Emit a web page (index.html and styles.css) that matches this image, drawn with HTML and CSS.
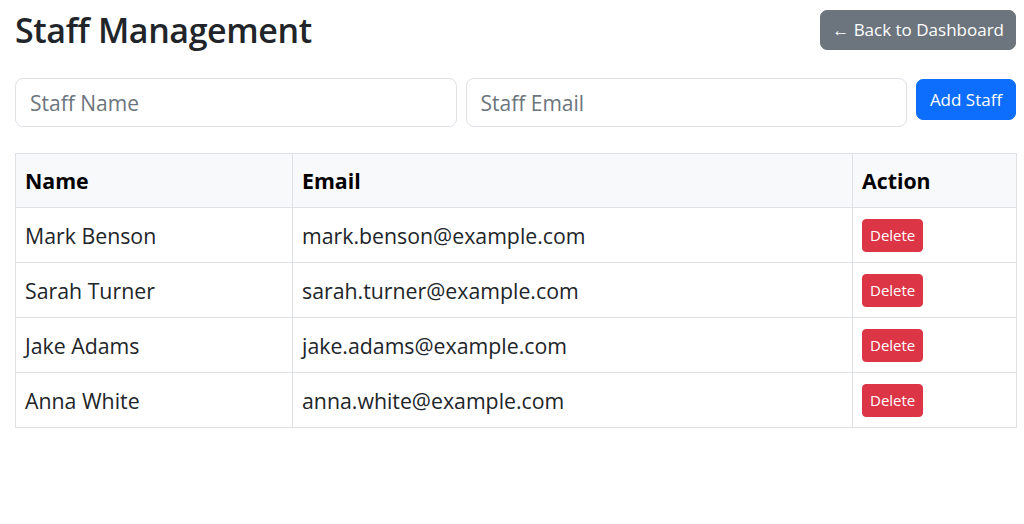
FILE: index.html
```html
<!DOCTYPE html>
<html lang="en">
<head>
<meta charset="utf-8">
<title>Staff Management</title>
<link rel="stylesheet" href="styles.css">
</head>
<body>
<div class="container">
  <div class="header">
    <h3 class="title">Staff Management</h3>
    <button class="btn btn-secondary">← Back to Dashboard</button>
  </div>
  <div class="add-row">
    <input class="form-control" type="text" placeholder="Staff Name">
    <input class="form-control" type="email" placeholder="Staff Email">
    <button class="btn btn-primary">Add Staff</button>
  </div>
  <table class="staff-table">
    <thead>
      <tr><th class="col-name">Name</th><th class="col-email">Email</th><th class="col-action">Action</th></tr>
    </thead>
    <tbody>
      <tr><td>Mark Benson</td><td>mark.benson@example.com</td><td><button class="btn-delete">Delete</button></td></tr>
      <tr><td>Sarah Turner</td><td>sarah.turner@example.com</td><td><button class="btn-delete">Delete</button></td></tr>
      <tr><td>Jake Adams</td><td>jake.adams@example.com</td><td><button class="btn-delete">Delete</button></td></tr>
      <tr><td>Anna White</td><td>anna.white@example.com</td><td><button class="btn-delete">Delete</button></td></tr>
    </tbody>
  </table>
</div>
</body>
</html>
```

FILE: styles.css
```css
* { box-sizing: border-box; }
html, body { margin: 0; padding: 0; background: #fff; }
body {
  font-family: "Open Sans", "Noto Sans", sans-serif;
  color: #212529;
  font-size: 21px;
}
.container {
  width: 1016px;
  padding: 10px 0 0 15px;
}
.header {
  display: flex;
  justify-content: space-between;
  align-items: center;
  height: 40px;
}
.title {
  margin: 0;
  font-size: 34px;
  font-weight: 600;
  line-height: 40px;
  letter-spacing: -0.4px;
  color: #212529;
}
.btn {
  font-family: inherit;
  border: 1px solid transparent;
  border-radius: 7px;
  color: #fff;
  font-size: 17px;
  line-height: 26px;
  padding: 6px 11px;
  white-space: nowrap;
  cursor: pointer;
}
.btn-secondary { background: #6c757d; border-color: #6c757d; height: 40px; }
.btn-primary { background: #0d6efd; border-color: #0d6efd; padding: 0; }
.add-row {
  display: flex;
  align-items: flex-start;
  gap: 9px;
  margin-top: 28px;
}
.form-control {
  flex: 1 1 0;
  min-width: 0;
  height: 49px;
  border: 1px solid #dee2e6;
  border-radius: 8px;
  padding: 0 14px;
  font-family: inherit;
  font-size: 21px;
  color: #212529;
}
.form-control::placeholder { color: #6c757d; }
.add-row .btn { flex: 0 0 100px; height: 41px; margin-top: 1px; }
.staff-table {
  margin-top: 26px;
  width: 1001px;
  border-collapse: collapse;
  table-layout: fixed;
}
.staff-table th, .staff-table td {
  border: 1px solid #dee2e6;
  padding: 0 9px;
  height: 55px;
  text-align: left;
  vertical-align: middle;
  font-size: 21.3px;
}
.staff-table th {
  background: #f8f9fa;
  color: #000;
  font-weight: 700;
  height: 54px;
}
.col-name { width: 277px; }
.col-email { width: 560px; }
.col-action { width: 164px; }
.btn-delete {
  font-family: inherit;
  background: #dc3545;
  border: 1px solid #dc3545;
  color: #fff;
  font-size: 15px;
  line-height: 23px;
  padding: 4px 7px;
  border-radius: 4px;
  cursor: pointer;
}
```
